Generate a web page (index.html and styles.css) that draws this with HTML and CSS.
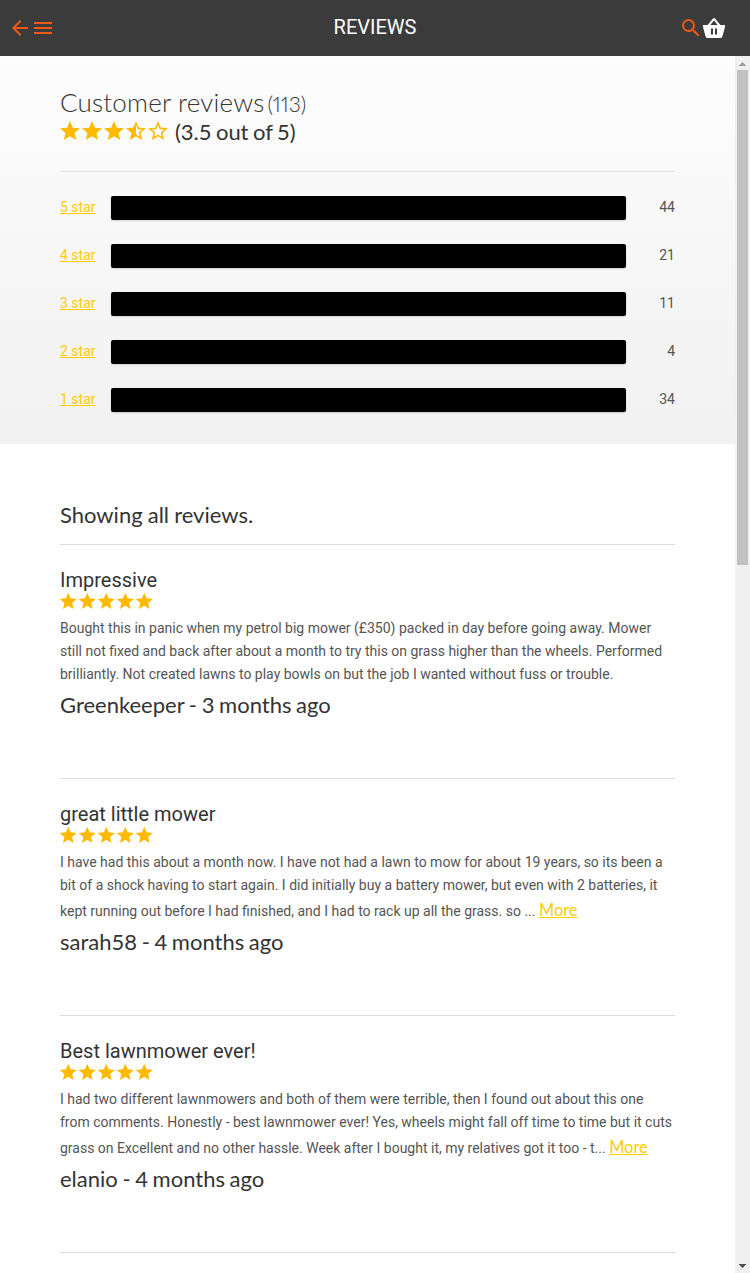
FILE: index.html
```
<!DOCTYPE html>
<html lang="en">
<head>
<meta charset="utf-8">
<title>Reviews</title>
<link rel="stylesheet" href="styles.css">
</head>
<body>
<svg class="defs" width="0" height="0" aria-hidden="true">
  <symbol id="star" viewBox="0 0 24 24"><path d="M12 17.27 18.18 21l-1.64-7.03L22 9.24l-7.19-.61L12 2 9.19 8.63 2 9.24l5.46 4.73L5.82 21z"/></symbol>
  <symbol id="star-half" viewBox="0 0 24 24"><path d="M22 9.24l-7.19-.62L12 2 9.19 8.63 2 9.24l5.46 4.73L5.82 21 12 17.27 18.18 21l-1.63-7.03L22 9.24zM12 15.4V6.1l1.71 4.04 4.38.38-3.32 2.88 1 4.28L12 15.4z"/></symbol>
  <symbol id="star-outline" viewBox="0 0 24 24"><path d="M22 9.24l-7.19-.62L12 2 9.19 8.63 2 9.24l5.46 4.73L5.82 21 12 17.27 18.18 21l-1.63-7.03L22 9.24zM12 15.4l-3.76 2.27 1-4.28-3.32-2.88 4.38-.38L12 6.1l1.71 4.04 4.38.38-3.32 2.88 1 4.28L12 15.4z"/></symbol>
</svg>
<header class="topbar">
  <div class="tools">
    <svg class="icon accent" viewBox="0 0 24 24"><path d="M20 11H7.83l5.59-5.59L12 4l-8 8 8 8 1.41-1.41L7.83 13H20v-2z"/></svg>
    <svg class="icon accent" viewBox="0 0 24 24"><path d="M3 18h18v-2H3v2zm0-5h18v-2H3v2zm0-7v2h18V6H3z"/></svg>
  </div>
  <h1 class="title">REVIEWS</h1>
  <div class="tools">
    <svg class="icon accent" viewBox="0 0 24 24"><path d="M15.5 14h-.79l-.28-.27A6.47 6.47 0 0 0 16 9.5 6.5 6.5 0 1 0 9.5 16c1.61 0 3.09-.59 4.23-1.57l.27.28v.79l5 4.99L20.49 19l-4.99-5zm-6 0a4.5 4.5 0 1 1 0-9 4.5 4.5 0 0 1 0 9z"/></svg>
    <svg class="icon" viewBox="0 0 24 24"><path fill-rule="evenodd" d="M1 9h4.6L11 2.6q1-1.100 2 0L18.400 9H23v2l-2.600 9.500q-.4 1.500-1.900 1.500h-13q-1.500 0-1.900-1.500L1 11zM8.300 9h7.400L12 4.500zM9 12.500v6h2v-6zm4 0v6h2v-6z"/></svg>
  </div>
</header>
<div class="viewport">
  <main class="content">
    <section class="summary">
      <h2 class="heading">Customer reviews<span class="count">(113)</span></h2>
      <div class="rating">
        <div class="stars large">
          <svg><use href="#star"/></svg><svg><use href="#star"/></svg><svg><use href="#star"/></svg><svg><use href="#star-half"/></svg><svg><use href="#star-outline"/></svg>
        </div>
        <span class="score">(3.5 out of 5)</span>
      </div>
      <div class="bars">
        <div class="row"><a class="link">5 star</a><div class="bar"></div><span class="num">44</span></div>
        <div class="row"><a class="link">4 star</a><div class="bar"></div><span class="num">21</span></div>
        <div class="row"><a class="link">3 star</a><div class="bar"></div><span class="num">11</span></div>
        <div class="row"><a class="link">2 star</a><div class="bar"></div><span class="num">4</span></div>
        <div class="row"><a class="link">1 star</a><div class="bar"></div><span class="num">34</span></div>
      </div>
    </section>
    <section class="list">
      <p class="showing">Showing all reviews.</p>
      <article class="review">
        <h3 class="name">Impressive</h3>
        <div class="stars"><svg><use href="#star"/></svg><svg><use href="#star"/></svg><svg><use href="#star"/></svg><svg><use href="#star"/></svg><svg><use href="#star"/></svg></div>
        <p class="text">Bought this in panic when my petrol big mower (£350) packed in day before going away. Mower<br>still not fixed and back after about a month to try this on grass higher than the wheels. Performed<br>brilliantly. Not created lawns to play bowls on but the job I wanted without fuss or trouble.</p>
        <p class="author">Greenkeeper - 3 months ago</p>
      </article>
      <article class="review">
        <h3 class="name">great little mower</h3>
        <div class="stars"><svg><use href="#star"/></svg><svg><use href="#star"/></svg><svg><use href="#star"/></svg><svg><use href="#star"/></svg><svg><use href="#star"/></svg></div>
        <p class="text">I have had this about a month now. I have not had a lawn to mow for about 19 years, so its been a<br>bit of a shock having to start again. I did initially buy a battery mower, but even with 2 batteries, it</p>
        <p class="text last">kept running out before I had finished, and I had to rack up all the grass. so ... <a class="more">More</a></p>
        <p class="author">sarah58 - 4 months ago</p>
      </article>
      <article class="review">
        <h3 class="name">Best lawnmower ever!</h3>
        <div class="stars"><svg><use href="#star"/></svg><svg><use href="#star"/></svg><svg><use href="#star"/></svg><svg><use href="#star"/></svg><svg><use href="#star"/></svg></div>
        <p class="text">I had two different lawnmowers and both of them were terrible, then I found out about this one<br>from comments. Honestly - best lawnmower ever! Yes, wheels might fall off time to time but it cuts</p>
        <p class="text last">grass on Excellent and no other hassle. Week after I bought it, my relatives got it too - t... <a class="more">More</a></p>
        <p class="author">elanio - 4 months ago</p>
      </article>
      <article class="review"></article>
    </section>
  </main>
  <div class="scrollbar">
    <svg class="arrow up" viewBox="0 0 7 4"><path d="M3 0h1v1h1v1h1v1h1v1H0V3h1V2h1V1h1z"/></svg>
    <div class="thumb"></div>
    <svg class="arrow down" viewBox="0 0 7 4"><path d="M0 0h7v1H6v1H5v1H4v1H3V3H2V2H1V1H0z"/></svg>
  </div>
</div>
</body>
</html>
```
FILE: styles.css
```
* { box-sizing: border-box; }
html, body { height: 100%; }
body { margin: 0; overflow: hidden; background: #fff; color: #333; font-family: Roboto, sans-serif; }
h1, h2, h3, p { margin: 0; font-weight: 400; white-space: nowrap; }
.defs { position: absolute; }
.topbar { height: 56px; padding: 0 23px 0 8px; display: grid; grid-template-columns: 50px 1fr 48px; align-items: center; background: #3b3b3b; color: #fff; }
.title { font-size: 20px; line-height: 24px; text-align: center; padding: 0 0 2px 13px; }
.tools { display: flex; }
.tools .icon + .icon { margin-left: -1px; }
.icon { display: block; flex: none; width: 24px; height: 24px; fill: #fff; }
.accent { fill: #ed5a16; }
.viewport { display: flex; height: 1217px; }
.content { width: 735px; overflow: hidden; }
.summary { height: 388px; padding: 31px 60px 0; background: linear-gradient(#fdfdfd, #f1f1f1); }
.heading { font-family: Lato, sans-serif; font-weight: 300; font-size: 26px; line-height: 30px; height: 31px; letter-spacing: .2px; color: #333; }
.count { font-size: 21px; margin-left: 3px; letter-spacing: 0; font-variant-numeric: proportional-nums; }
.rating { display: flex; align-items: center; height: 28px; font-family: Lato, sans-serif; font-size: 22px; line-height: 28px; gap: 7px; }
.score { word-spacing: -1px; letter-spacing: -.05px; }
.stars { display: flex; height: 20px; margin-left: -1.7px; fill: #ffba00; }
.stars svg { display: block; width: 20.5px; height: 20.5px; margin-top: -1px; margin-right: -1.5px; flex: none; }
.stars.large { height: 24px; margin-top: -2px; margin-left: -2px; }
.stars.large svg { width: 24px; height: 24px; margin-top: 0; margin-right: -2px; }
.bars { margin-top: 25px; border-top: 1px solid #e3e3e3; padding-top: 24px; display: grid; gap: 24px; }
.row { display: grid; grid-template-columns: 51px 515px 1fr; height: 24px; font-size: 14px; line-height: 23px; }
.link, .more { color: #fc0; text-decoration: underline; }
.bar { background: #000; border-radius: 2px; box-shadow: 0 1px 2px rgba(0, 0, 0, .15); }
.num { text-align: right; color: #555; }
.list { padding: 56px 60px 0; }
.showing { font-family: Lato, sans-serif; font-size: 22px; line-height: 30px; padding-bottom: 14px; word-spacing: -.5px; }
.review { border-top: 1px solid #ddd; padding: 23px 0 33px; }
.name { font-size: 20px; line-height: 24px; }
.text { font-size: 14px; line-height: 23px; color: #555; }
.stars + .text { padding-top: 5px; }
.last { line-height: 28px; height: 26px; }
.more { font-family: Lato, sans-serif; font-size: 16.4px; line-height: 20px; }
.author { font-family: Lato, sans-serif; font-size: 22px; line-height: 30px; padding: 4px 0 25px; height: 59px; word-spacing: -1px; }
.scrollbar { width: 15px; background: #f0f0f0; display: flex; flex-direction: column; padding: 6px 2px 5px; align-items: center; }
.arrow { width: 7px; height: 4px; flex: none; shape-rendering: crispEdges; }
.up { fill: #a0a0a0; }
.down { fill: #505050; margin-top: auto; }
.thumb { width: 11px; height: 495px; margin-top: 4px; background: #c1c1c1; }
```
